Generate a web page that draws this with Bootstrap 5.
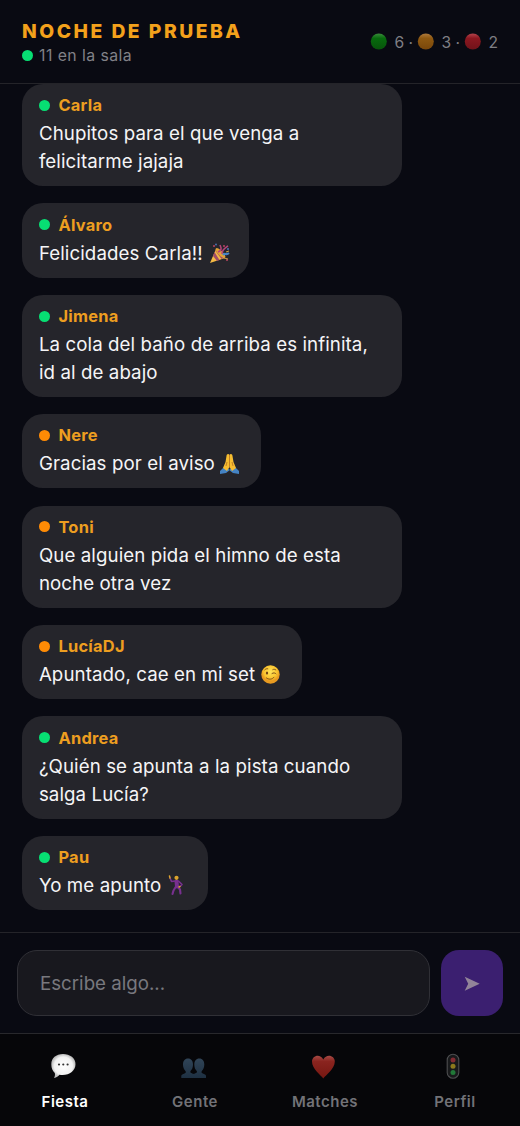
<!DOCTYPE html>
<html lang="es">
<head>
<meta charset="utf-8">
<meta name="viewport" content="width=device-width, initial-scale=1">
<title>Noche de prueba</title>
<link href="https://cdn.jsdelivr.net/npm/bootstrap@5.3.0/dist/css/bootstrap.min.css" rel="stylesheet">
<style>
body{background:#090a12;color:#f5f5f7;font-family:Inter,"Liberation Sans",sans-serif;height:1126px;overflow:hidden}
svg{display:block;flex:none}
.topbar{height:84px;padding:19px 22px 0;border-bottom:1px solid #242429}
.room{font-size:19.3px;line-height:24px;font-weight:800;letter-spacing:2.5px;color:#f3a11b}
.sub{font-size:15.8px;line-height:24px;color:#818187;gap:6px;letter-spacing:.45px}
.sub span:last-child{padding-top:1px}
.dot{width:11px;height:11px;border-radius:50%;background:#07df73;flex:none}
.dot-o{background:#ff8b05}
.counts{font-size:15.6px;line-height:24px;color:#7f7f84;padding-top:11px}
.c-txt{width:23px;white-space:nowrap;padding-left:.5px;padding-top:1px}
.c-txt:last-child{width:10px}
.feed{height:848px;padding:0 22px;gap:17.1px;overflow:hidden}
.bubble{background:#25252b;border-radius:21px;padding:11.3px 16.9px 10px;max-width:380px}
.who{font-size:16.4px;line-height:20px;height:25px;padding-bottom:5px;font-weight:700;letter-spacing:.28px;color:#ed9e20;gap:8.500px}
.msg{font-size:18.7px;line-height:28px;letter-spacing:.09px;gap:5px;white-space:nowrap}
.msg svg{margin-right:.6px}
.composer{height:101px;border-top:1px solid #242429;padding:17px 17px 0;gap:11px}
.entry.form-control{height:66px;background:#18181e;border:1.4px solid #303036;border-radius:20px;padding:0 22px;font-size:18.7px;color:#fff;width:413px;flex:none}
.entry.form-control::placeholder{color:#78787e;opacity:1}
.send.btn{width:62px;height:66px;border-radius:18px;background:#3b1f70;border:0;padding:1px 0 0}
.tabs{height:93px;background:#060609;border-top:1px solid #28282c;padding-top:17px}
.tabs a{color:#727277;text-decoration:none;font-size:15px;font-weight:600;line-height:22px;letter-spacing:.5px;gap:11px}
.tabs a.active{color:#fff}
</style>
</head>
<body class="d-flex flex-column">
<header class="topbar d-flex justify-content-between">
  <div>
    <div class="room">NOCHE DE PRUEBA</div>
    <div class="sub d-flex align-items-center"><span class="dot"></span><span>11 en la sala</span></div>
  </div>
  <div class="counts d-flex">
    <svg width="24" height="24" viewBox="0 0 24 24"><defs><linearGradient id="cg" x2="0" y2="1"><stop stop-color="#3b8b3b"/><stop offset=".3" stop-color="#076b0d"/><stop offset="1" stop-color="#08540c"/></linearGradient></defs><circle cx="8.800" cy="11.500" r="8" fill="url(#cg)"/></svg>
    <span class="c-txt">6 ·</span>
    <svg width="24" height="24" viewBox="0 0 24 24"><defs><linearGradient id="co" x2="0" y2="1"><stop stop-color="#ae7a3c"/><stop offset=".3" stop-color="#8f5911"/><stop offset="1" stop-color="#79470b"/></linearGradient></defs><circle cx="8.800" cy="11.500" r="8" fill="url(#co)"/></svg>
    <span class="c-txt">3 ·</span>
    <svg width="24" height="24" viewBox="0 0 24 24"><defs><linearGradient id="cr" x2="0" y2="1"><stop stop-color="#b3444c"/><stop offset=".3" stop-color="#8b1720"/><stop offset="1" stop-color="#70131a"/></linearGradient></defs><circle cx="8.800" cy="11.500" r="8" fill="url(#cr)"/></svg>
    <span class="c-txt">2</span>
  </div>
</header>

<main class="feed d-flex flex-column align-items-start">
  <div class="bubble w-100"><div class="who d-flex align-items-center"><span class="dot"></span>Carla</div><div class="msg">Chupitos para el que venga a<br>felicitarme jajaja</div></div>
  <div class="bubble"><div class="who d-flex align-items-center"><span class="dot"></span>Álvaro</div><div class="msg d-flex align-items-center">Felicidades Carla!!
    <svg width="24" height="22" viewBox="0 0 24 22"><path d="M2 20 8 6l9 9Z" fill="#f4b944"/><path d="m6.5 9 5 8-2.5 1-4-5Zm2-3 7 9-2 1-6-8Z" fill="#a14d68"/><ellipse cx="12.5" cy="10" rx="2.3" ry="6.5" transform="rotate(-45 12.5 10)" fill="#e1a037"/><path d="M10 9c3-1 4-3 2-7m2 9c0-5 3-6 6-8" fill="none" stroke="#b34479" stroke-width="1.6"/><path d="M15 12c2-3 3 1 6-2" fill="none" stroke="#4584c8" stroke-width="2"/><g fill="#b74561"><circle cx="6" cy="3" r="1"/><circle cx="16" cy="3" r="1"/><circle cx="19" cy="17" r="1"/></g><g fill="#4e74bb"><circle cx="8" cy="1.5" r=".9"/><circle cx="20" cy="6" r="1"/></g><path d="m16 15 4 1m-2-7 3-1" stroke="#cc9d44"/></svg></div></div>
  <div class="bubble w-100"><div class="who d-flex align-items-center"><span class="dot"></span>Jimena</div><div class="msg">La cola del baño de arriba es infinita,<br>id al de abajo</div></div>
  <div class="bubble"><div class="who d-flex align-items-center"><span class="dot dot-o"></span>Nere</div><div class="msg d-flex align-items-center">Gracias por el aviso
    <svg width="24" height="22" viewBox="1 0 24 22"><path d="m1 18 5-5 5 4-4 3-6 1ZM20 18l-5-5-5 4 4 3 6 1Z" fill="#4483c4"/><path d="M10.500 2c-1-2-3-1-3 1L6.500 9 4 15l4 3 2.500-4 2.500 4 4-3-2.500-6-1-6c0-2-2-3-3-1Z" fill="#f6bd31"/><path d="M10.500 2v12M8 9l-1 4m6-4 1 4" stroke="#ba7722" stroke-width=".9" fill="none"/></svg></div></div>
  <div class="bubble w-100"><div class="who d-flex align-items-center"><span class="dot dot-o"></span>Toni</div><div class="msg">Que alguien pida el himno de esta<br>noche otra vez</div></div>
  <div class="bubble"><div class="who d-flex align-items-center"><span class="dot dot-o"></span>LucíaDJ</div><div class="msg d-flex align-items-center">Apuntado, cae en mi set
    <svg width="24" height="22" viewBox="0 0 24 22"><defs><radialGradient id="wf" cy=".35"><stop stop-color="#ffe45a"/><stop offset=".7" stop-color="#fac52f"/><stop offset="1" stop-color="#e89a20"/></radialGradient></defs><circle cx="10.500" cy="10.500" r="9.200" fill="url(#wf)"/><ellipse cx="7" cy="9" rx="1.100" ry="1.500" fill="#704015"/><path d="M12 9.500c1.500-1 3-.8 4 .3M4.800 5.800c1-1 2-1.300 3-1m5 .8c1-.6 2-.4 3 .3M6.500 14c2.500 1.800 5.500 1.600 7.500-.8" fill="none" stroke="#805018" stroke-width="1" stroke-linecap="round"/></svg></div></div>
  <div class="bubble w-100"><div class="who d-flex align-items-center"><span class="dot"></span>Andrea</div><div class="msg">¿Quién se apunta a la pista cuando<br>salga Lucía?</div></div>
  <div class="bubble"><div class="who d-flex align-items-center"><span class="dot"></span>Pau</div><div class="msg d-flex align-items-center">Yo me apunto
    <svg width="24" height="22" viewBox="0 0 24 22"><g fill="none" stroke="#78308f" stroke-linecap="round" stroke-linejoin="round"><path d="m10.500 6.500.5 5" stroke-width="4"/><path d="M9.500 6 5.500 6.500 4 3M12.500 6l3.500 3.500-2 2" stroke-width="1.600"/><path d="m10 11.500-2.500 4-1 3.500m5-7.500 2.500 3 .5 4" stroke-width="2.100"/></g><circle cx="10.500" cy="2.800" r="2.100" fill="#dba42d"/><path d="m4 3-.5-2M14 11.500l-1 .5" stroke="#dba42d" stroke-width="1.500" stroke-linecap="round"/></svg></div></div>
</main>

<form class="composer d-flex">
  <input class="form-control entry" type="text" placeholder="Escribe algo...">
  <button class="btn send d-flex align-items-center justify-content-center" type="button" aria-label="Enviar"><svg width="16" height="16" viewBox="0 0 16 16"><path d="m.7.8 15 7-15 7 3.500-7Z" fill="#928499"/></svg></button>
</form>

<nav class="tabs row g-0">
  <a class="col active d-flex flex-column align-items-center" href="#"><svg width="29" height="29" viewBox="1 0 29 29"><defs><radialGradient id="bb"><stop stop-color="#fff"/><stop offset=".75" stop-color="#f2f2f2"/><stop offset="1" stop-color="#bcbcbc"/></radialGradient></defs><path d="M13 3C20 3 25.500 7.200 25.500 13.300S20 24 12.500 24c-1 0-2-.1-3-.3-1 1.500-3 3-5.500 3.200 1-1.500 1.200-3 .8-4.800C2.500 20 1.300 17 1.300 13.300 1.300 7.200 6 3 13 3Z" fill="url(#bb)"/><g fill="#333"><circle cx="9" cy="13.500" r="1.100"/><circle cx="13.300" cy="13.500" r="1.100"/><circle cx="17.600" cy="13.500" r="1.100"/></g></svg><span>Fiesta</span></a>
  <a class="col d-flex flex-column align-items-center" href="#"><svg width="29" height="29" viewBox="0 0 29 29"><defs><linearGradient id="pp" x2="0" y2="1"><stop stop-color="#304457"/><stop offset="1" stop-color="#1e3042"/></linearGradient></defs><path id="person" d="M7 7.500c3.200 0 5 2.500 5 6 0 3-1 5.200-2.500 6.500-.5 1.500 0 2 3.500 3v4H.3V25c0-1.500 1.700-2 3.200-2.500 1.500-.5 1.500-1.500 1-2.500C3 18.500 2 16.500 2 13.500c0-3.500 1.800-6 5-6Z" fill="url(#pp)"/><use href="#person" transform="matrix(-1 0 0 1 25.300 0)"/></svg><span>Gente</span></a>
  <a class="col d-flex flex-column align-items-center" href="#"><svg width="29" height="29" viewBox=".5 0 29 29"><defs><linearGradient id="hh" x2="0" y2="1"><stop stop-color="#a64b46"/><stop offset=".25" stop-color="#8a241f"/><stop offset="1" stop-color="#761711"/></linearGradient></defs><path d="M12.800 27.500C10.300 24 1.500 18 1.500 10.500c0-6 8-8.500 11.300-2 3.300-6.500 11.500-4 11.500 2 0 7.500-9 13.500-11.500 17Z" fill="url(#hh)"/></svg><span>Matches</span></a>
  <a class="col d-flex flex-column align-items-center" href="#"><svg width="29" height="29" viewBox="0 0 29 29"><rect x="6.200" y="3.200" width="11.600" height="24" rx="5.800" fill="#18191b" stroke="#4d4e50" stroke-width="1.100"/><circle cx="12" cy="9" r="2.500" fill="#812a32"/><circle cx="12" cy="15.300" r="2.500" fill="#8c781c"/><circle cx="12" cy="21.500" r="2.500" fill="#217838"/></svg><span>Perfil</span></a>
</nav>
<script src="https://cdn.jsdelivr.net/npm/bootstrap@5.3.0/dist/js/bootstrap.bundle.min.js"></script>
</body>
</html>
